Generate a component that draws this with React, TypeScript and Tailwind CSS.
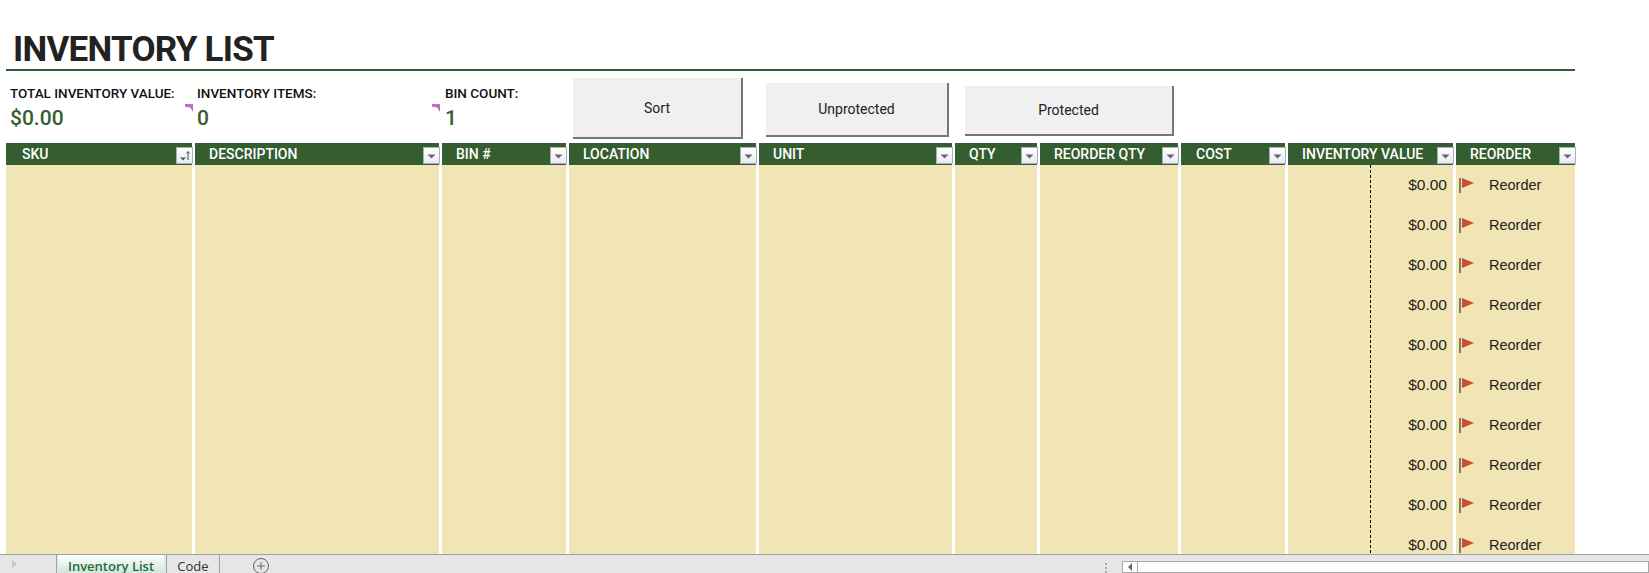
import { Plus } from "lucide-react";

const cols = [
  { name: "SKU", w: "w-[186px]", pl: "pl-[16px]", sorted: true },
  { name: "DESCRIPTION", w: "w-[244px]", pl: "pl-[14px]" },
  { name: "BIN #", w: "w-[124px]", pl: "pl-[14px]" },
  { name: "LOCATION", w: "w-[187px]", pl: "pl-[14px]" },
  { name: "UNIT", w: "w-[193px]", pl: "pl-[14px]" },
  { name: "QTY", w: "w-[82px]", pl: "pl-[14px]" },
  { name: "REORDER QTY", w: "w-[138px]", pl: "pl-[14px]" },
  { name: "COST", w: "w-[104px]", pl: "pl-[15px]" },
  { name: "INVENTORY VALUE", w: "w-[165px]", pl: "pl-[14px]" },
  { name: "REORDER", w: "w-[119px]", pl: "pl-[14px]" },
];

const rows = [0, 1, 2, 3, 4, 5, 6, 7, 8, 9];

function FilterButton({ sorted }: { sorted?: boolean }) {
  return (
    <div className="absolute right-[-1px] top-[4px] flex h-[17px] w-[17px] items-center justify-center border border-[#a9aeb8] bg-gradient-to-b from-white to-[#e8ebf2]">
      <svg width="15" height="15" viewBox="0 0 15 15">
        {sorted ? (
          <>
            <path d="M3 9.5h6l-3 3z" fill="#555" />
            <path d="M11 12V4M9.5 5.5 11 3.5l1.500 2" stroke="#555" strokeWidth="1" fill="none" />
          </>
        ) : (
          <path d="M3.500 6.500h8l-4 4z" fill="#666" />
        )}
      </svg>
    </div>
  );
}

function Flag() {
  return (
    <svg width="16" height="16" viewBox="0 0 16 16" className="shrink-0">
      <rect x="0" y="0" width="2" height="15" fill="#7a7a7a" />
      <path d="M3 0 15 5 3 10z" fill="#c8502c" />
    </svg>
  );
}

function ExcelButton({ label, className }: { label: string; className: string }) {
  return (
    <div
      className={`flex shrink-0 items-center justify-center border-r-2 border-b-2 border-[#767676] bg-[#f0f0f0] text-[14px] text-[#222] ${className}`}
    >
      {label}
    </div>
  );
}

function CommentMark({ className }: { className: string }) {
  return (
    <div className={`absolute top-[33px] h-[8px] w-[8px] bg-[#bb6fc8] [clip-path:polygon(0_0,100%_0,100%_100%,65%_45%,0_35%)] ${className}`} />
  );
}

function Stat({ label, value, className, mark }: { label: string; value: string; className: string; mark?: string }) {
  return (
    <div className={`relative shrink-0 pt-[12px] ${className}`}>
      <div className="text-[13.5px] leading-[20px] font-medium text-[#111]">{label}</div>
      <div className="mt-[2px] text-[21px] leading-[26px] font-medium text-[#355e30]">{value}</div>
      {mark && <CommentMark className={mark} />}
    </div>
  );
}

export default function App() {
  return (
    <div className="flex h-[573px] w-[1649px] flex-col overflow-hidden bg-white font-['Roboto',sans-serif]">
      {/* title */}
      <div className="ml-[6px] w-[1569px] shrink-0 border-b-2 border-[#355e30] pt-[31px] pl-[7px]">
        <h1 className="text-[35px] leading-[38px] font-bold tracking-[-0.75px] text-[#222]">INVENTORY LIST</h1>
      </div>

      {/* totals and buttons */}
      <div className="flex h-[72px] shrink-0 items-start pl-[10px]">
        <Stat label="TOTAL INVENTORY VALUE:" value="$0.00" className="w-[187px]" mark="right-[4px]" />
        <Stat label="INVENTORY ITEMS:" value="0" className="w-[248px]" mark="right-[5px]" />
        <Stat label="BIN COUNT:" value="1" className="w-[128px]" />
        <ExcelButton label="Sort" className="mt-[7px] h-[61px] w-[170px] pt-[2px]" />
        <ExcelButton label="Unprotected" className="mt-[12px] ml-[23px] h-[54px] w-[183px]" />
        <ExcelButton label="Protected" className="mt-[15px] ml-[16px] h-[50px] w-[209px]" />
      </div>

      {/* table */}
      <div className="flex min-h-0 flex-1 gap-[3px] overflow-hidden pl-[6px]">
        {cols.map((col, i) => (
          <div key={col.name} className={`flex shrink-0 flex-col bg-[#f2e5b5] ${col.w}`}>
            <div
              className={`relative flex h-[22px] shrink-0 items-center bg-[#355e30] text-[14px] font-medium text-white ${col.pl}`}
            >
              {col.name}
              <FilterButton sorted={col.sorted} />
            </div>
            {i === 8 && (
              <div className="relative flex-1 pt-[8px] pr-[6px] text-right font-['Liberation_Sans',sans-serif] text-[15.5px] text-[#222]">
                <div className="absolute top-0 bottom-0 left-[82px] border-l border-dashed border-black" />
                {rows.map((r) => (
                  <div key={r} className="h-[40px] leading-[24px]">
                    $0.00
                  </div>
                ))}
              </div>
            )}
            {i === 9 && (
              <div className="flex-1 pt-[8px] pl-[3px] font-['Liberation_Sans',sans-serif] text-[14.5px] text-[#222]">
                {rows.map((r) => (
                  <div key={r} className="flex h-[40px] items-start gap-[14px] pt-[5px] leading-[24px]">
                    <Flag />
                    <span className="-mt-[5px]">Reorder</span>
                  </div>
                ))}
              </div>
            )}
          </div>
        ))}
      </div>

      {/* sheet tabs */}
      <div className="flex h-[19px] shrink-0 items-stretch border-t border-[#a0a0a0] bg-[#e6e6e6] font-['Open_Sans',sans-serif] text-[13px]">
        <div className="flex w-[57px] items-center border-r border-[#a0a0a0] pl-[12px]">
          <div className="h-0 w-0 border-y-[4px] border-l-[5px] border-y-transparent border-l-[#c4c4c4]" />
        </div>
        <div className="ml-[1px] flex w-[106px] items-start justify-center bg-gradient-to-b from-white to-[#cfe7d8] leading-[22px] font-semibold text-[#1e6b42]">
          Inventory List
        </div>
        <div className="ml-[2px] flex w-[54px] items-start justify-center border-x border-[#a0a0a0] leading-[22px] text-[#333]">
          Code
        </div>
        <div className="ml-[33px] flex items-start pt-[3px]">
          <div className="flex h-[16px] w-[16px] items-center justify-center rounded-full border border-[#666]">
            <Plus size={12} strokeWidth={2} className="text-[#666]" />
          </div>
        </div>
        <div className="ml-[836px] flex flex-col gap-[2px] pt-[8px]">
          <div className="h-[2px] w-[2px] bg-[#aaa]" />
          <div className="h-[2px] w-[2px] bg-[#aaa]" />
          <div className="h-[2px] w-[2px] bg-[#aaa]" />
        </div>
        <div className="mt-[6px] ml-[15px] flex flex-1 border border-[#a8a8a8] bg-white">
          <div className="flex w-[15px] items-center justify-center border-r border-[#a8a8a8]">
            <div className="h-0 w-0 border-y-[4px] border-r-[4px] border-y-transparent border-r-[#666]" />
          </div>
        </div>
      </div>
    </div>
  );
}
